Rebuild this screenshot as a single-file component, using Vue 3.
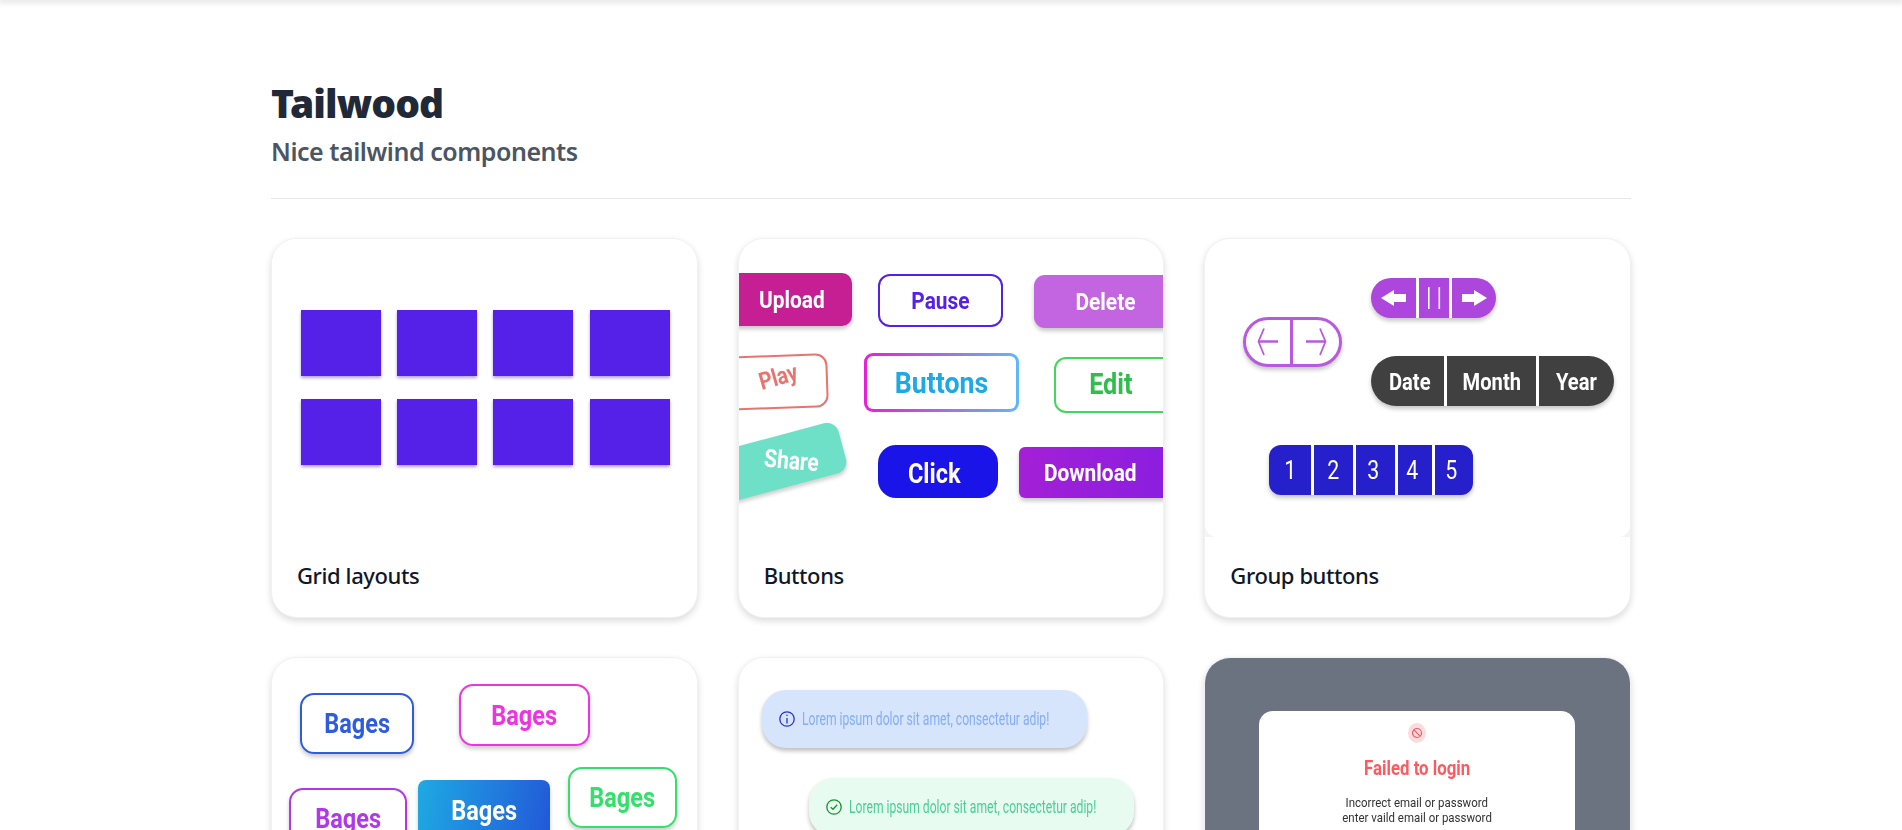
<script setup>
const squares = Array.from({ length: 8 }, (_, i) => i)
const numbers = [1, 2, 3, 4, 5]
</script>

<template>
  <div class="page">
    <div class="topbar"></div>
    <main class="main">
      <header class="head">
        <h1 class="title">Tailwood</h1>
        <h2 class="subtitle">Nice tailwind components</h2>
      </header>

      <section class="cards">
        <article class="card">
          <div class="preview grid-preview">
            <div v-for="s in squares" :key="s" class="square"></div>
          </div>
          <p class="caption">Grid layouts</p>
        </article>

        <article class="card">
          <div class="preview canvas">
            <div class="btn upload"><span class="lbl">Upload</span></div>
            <div class="btn pause"><span class="lbl">Pause</span></div>
            <div class="btn delete"><span class="lbl">Delete</span></div>
            <div class="btn play"></div>
            <span class="lbl play-text">Play</span>
            <div class="btn gradient"><span class="lbl">Buttons</span></div>
            <div class="btn edit"><span class="lbl">Edit</span></div>
            <div class="btn share"></div>
            <span class="lbl share-text">Share</span>
            <div class="btn click"><span class="lbl">Click</span></div>
            <div class="btn download"><span class="lbl">Download</span></div>
          </div>
          <p class="caption">Buttons</p>
        </article>

        <article class="card">
          <div class="preview-frame">
            <div class="preview canvas rounded-bottom">
              <div class="group outline">
                <span class="seg">
                  <svg width="22" height="30" viewBox="0 0 22 30" fill="none" stroke="#b85ae0">
                    <path d="M7 1.500 1.500 14.500 7 28" stroke-width="1.800" />
                    <path d="M2 14.500H21" stroke-width="2.500" />
                  </svg>
                </span>
                <span class="seg">
                  <svg width="22" height="30" viewBox="0 0 22 30" fill="none" stroke="#b85ae0">
                    <path d="M15 1.500 20.500 14.500 15 28" stroke-width="1.800" />
                    <path d="M1 14.500H20" stroke-width="2.500" />
                  </svg>
                </span>
              </div>

              <div class="group media">
                <span class="seg">
                  <svg width="26" height="16" viewBox="0 0 26 16" fill="#fff">
                    <path d="M0 8 13 0V4H25V12H13V16Z" />
                  </svg>
                </span>
                <span class="seg">
                  <svg width="14" height="22" viewBox="0 0 14 22" fill="#fff">
                    <rect x="1" width="1.600" height="22" />
                    <rect x="11.500" width="1.600" height="22" />
                  </svg>
                </span>
                <span class="seg">
                  <svg width="26" height="16" viewBox="0 0 26 16" fill="#fff">
                    <path d="M26 8 13 0V4H1V12H13V16Z" />
                  </svg>
                </span>
              </div>

              <div class="group dates">
                <span class="seg"><span class="lbl">Date</span></span>
                <span class="seg"><span class="lbl">Month</span></span>
                <span class="seg"><span class="lbl">Year</span></span>
              </div>

              <div class="group pager">
                <span v-for="n in numbers" :key="n" class="seg"><span class="lbl">{{ n }}</span></span>
              </div>
            </div>
          </div>
          <p class="caption">Group buttons</p>
        </article>

        <article class="card">
          <div class="preview canvas">
            <div class="bage b-blue"><span class="lbl">Bages</span></div>
            <div class="bage b-pink"><span class="lbl">Bages</span></div>
            <div class="bage b-purple"><span class="lbl">Bages</span></div>
            <div class="bage b-fill"><span class="lbl">Bages</span></div>
            <div class="bage b-green"><span class="lbl">Bages</span></div>
          </div>
        </article>

        <article class="card">
          <div class="preview canvas">
            <div class="alert a-blue">
              <svg width="16" height="20" viewBox="0 0 16 20" fill="none" stroke="#2a2fdc" stroke-width="1.300">
                <circle cx="8" cy="10" r="7.200" />
                <path d="M8 9V14.500" />
                <path d="M8 5.800V6.900" />
              </svg>
              <span class="lbl">Lorem ipsum dolor sit amet, consectetur adip!</span>
            </div>
            <div class="alert a-green">
              <svg width="16" height="20" viewBox="0 0 16 20" fill="none" stroke="#15922b" stroke-width="1.300">
                <circle cx="8" cy="10" r="7.200" />
                <path d="M4.700 10.200 7 12.300 11.200 7.800" />
              </svg>
              <span class="lbl">Lorem ipsum dolor sit amet, consectetur adip!</span>
            </div>
          </div>
        </article>

        <article class="card">
          <div class="preview modal-preview">
            <div class="modal">
              <span class="ban">
                <svg width="12" height="12" viewBox="0 0 12 12" fill="none" stroke="#ee5b66" stroke-width="1.200">
                  <circle cx="6" cy="6" r="4.500" />
                  <path d="M2.900 2.900 9.100 9.100" />
                </svg>
              </span>
              <strong class="modal-title"><span class="lbl">Failed to login</span></strong>
              <p class="modal-body"><span class="lbl">Incorrect email or password</span></p>
              <p class="modal-body"><span class="lbl">enter vaild email or password</span></p>
            </div>
          </div>
        </article>
      </section>
    </main>
  </div>
</template>

<style scoped>
.page {
  height: 830px;
  overflow: hidden;
  background: #fff;
  font-family: "Noto Sans", "Open Sans", sans-serif;
}
.topbar {
  height: 0;
  box-shadow: 0 0 6px 2px rgba(0, 0, 0, 0.16);
}
.main {
  width: 1360px;
  margin: 0 auto;
  padding-top: 78px;
}
.head {
  height: 121px;
  border-bottom: 1px solid #e5e7eb;
  box-sizing: border-box;
}
.title {
  margin: 0;
  font-size: 39px;
  line-height: 50px;
  font-weight: 900;
  color: #1f2937;
  letter-spacing: -0.95px;
}
.subtitle {
  margin: 7px 0 0;
  font-size: 25px;
  line-height: 32px;
  font-weight: 600;
  color: #4b5563;
  letter-spacing: -0.45px;
}
.cards {
  margin-top: 39px;
  display: grid;
  grid-template-columns: repeat(3, 1fr);
  column-gap: 40px;
  row-gap: 39px;
}
.card {
  height: 380px;
  box-sizing: border-box;
  display: flex;
  flex-direction: column;
  border: 1px solid #f1f1f3;
  border-radius: 26px;
  overflow: hidden;
  background: #fff;
  box-shadow: 0 3px 7px rgba(0, 0, 0, 0.14);
}
.caption {
  flex: 1;
  margin: 0;
  padding: 0 0 4px 25px;
  display: flex;
  align-items: center;
  font-size: 22px;
  font-weight: 500;
  color: #0f172a;
  letter-spacing: -0.4px;
}
.preview {
  height: 298px;
  flex: none;
  overflow: hidden;
  background: #fff;
}
.preview-frame {
  flex: none;
  background: #f3f4f6;
}
.rounded-bottom {
  border-radius: 0 0 12px 12px;
}
.canvas {
  position: relative;
  filter: blur(0.3px);
}
.lbl {
  display: inline-block;
  font-family: Roboto, sans-serif;
  white-space: nowrap;
}

/* grid card */
.grid-preview {
  box-sizing: border-box;
  padding: 71px 28.500px 0;
  display: grid;
  grid-template-columns: repeat(4, 80px);
  grid-auto-rows: 66px;
  column-gap: 16.400px;
  row-gap: 23px;
  align-content: start;
}
.square {
  background: #5520e8;
  box-shadow: 0 2px 3px rgba(60, 20, 160, 0.4);
}

/* buttons card */
.btn {
  position: absolute;
  box-sizing: border-box;
  display: flex;
  align-items: center;
  justify-content: center;
  font-size: 24px;
}
.btn .lbl {
  font-weight: 700;
  transform: scaleX(0.87);
}
.play-text,
.share-text {
  font-weight: 700;
}
.upload {
  left: -20px;
  top: 34px;
  width: 133px;
  height: 53px;
  padding-left: 14px;
  border-radius: 10px;
  background: #c61f93;
  color: #fff;
  box-shadow: 0 3px 4px rgba(0, 0, 0, 0.22);
}
.pause {
  left: 139.500px;
  top: 35px;
  width: 125px;
  height: 53px;
  border: 2.500px solid #5520e8;
  border-radius: 12px;
  color: #5520e8;
}
.delete {
  left: 295px;
  top: 36px;
  width: 165px;
  height: 53px;
  padding-right: 21px;
  border-radius: 11px;
  background: #c364e0;
  color: #fff;
  box-shadow: 0 3px 4px rgba(0, 0, 0, 0.22);
}
.play {
  left: -20px;
  top: 116px;
  width: 109px;
  height: 54px;
  border: 2.500px solid #e8746f;
  border-radius: 12px;
  transform: rotate(-2deg);
}
.play-text {
  position: absolute;
  left: 16px;
  top: 124px;
  font-size: 24px;
  color: #e8746f;
  transform: rotate(-16deg) scaleX(0.84);
}
.gradient {
  left: 125px;
  top: 114px;
  width: 155px;
  height: 59px;
  border: 3px solid transparent;
  border-radius: 9px;
  background: linear-gradient(#fff, #fff) padding-box,
    linear-gradient(to right, #e81fd8, #5fb8f8) border-box;
  color: #1da9e5;
  font-size: 30px;
}
.gradient .lbl {
  transform: scaleX(0.89);
}
.edit {
  left: 315px;
  top: 118px;
  width: 160px;
  height: 56px;
  padding: 0 46px 4px 0;
  border: 2.500px solid #3fd85b;
  border-radius: 12px;
  color: #2fbd4b;
  font-size: 30px;
}
.edit .lbl {
  transform: scaleX(0.84);
}
.share {
  left: -54px;
  top: 201px;
  width: 160px;
  height: 52px;
  border-radius: 12px;
  background: #6fe0c8;
  box-shadow: 0 3px 4px rgba(0, 0, 0, 0.18);
  transform: rotate(-15deg);
}
.share-text {
  position: absolute;
  left: 20px;
  top: 207px;
  font-size: 25px;
  color: #fff;
  transform: rotate(5deg) scaleX(0.84);
}
.click {
  left: 139px;
  top: 206px;
  width: 120px;
  height: 53px;
  padding: 4px 6px 0 0;
  border-radius: 18px;
  background: #1b14e8;
  color: #fff;
  font-size: 27px;
}
.download {
  left: 280px;
  top: 208px;
  width: 180px;
  height: 51px;
  padding-right: 36px;
  border-radius: 6px;
  background: linear-gradient(100deg, #a420d6, #851de2);
  color: #fff;
  box-shadow: 0 3px 4px rgba(0, 0, 0, 0.22);
}

/* group buttons */
.group {
  position: absolute;
  box-sizing: border-box;
  display: grid;
  overflow: hidden;
  border-radius: 999px;
  box-shadow: 0 3px 4px rgba(0, 0, 0, 0.22);
}
.seg {
  display: flex;
  align-items: center;
  justify-content: center;
  box-sizing: border-box;
  min-width: 0;
}
.seg:not(:last-child) {
  border-right: 3px solid #fff;
}
.group .lbl {
  font-weight: 700;
  color: #fff;
  transform: scaleX(0.84);
}
.outline {
  left: 38px;
  top: 78px;
  width: 99px;
  height: 50px;
  grid-template-columns: 1fr 1fr;
  border: 3px solid #b85ae0;
  background: #fff;
}
.outline .seg:not(:last-child) {
  border-right-color: #b85ae0;
}
.media {
  left: 166px;
  top: 38.500px;
  width: 125px;
  height: 40px;
  grid-template-columns: 47.500px 33px 1fr;
  background: #ac46dc;
}
.dates {
  left: 166px;
  top: 117px;
  width: 243px;
  height: 50px;
  grid-template-columns: 75.500px 92px 1fr;
  background: #404040;
  font-size: 24px;
}
.dates .seg {
  padding-top: 2px;
}
.dates .seg:first-child {
  padding-left: 5px;
}
.pager {
  left: 64px;
  top: 206px;
  width: 204px;
  height: 50px;
  grid-template-columns: 44.500px 42px 42px 37px 1fr;
  border-radius: 12px;
  background: #2620cc;
  font-size: 26px;
}
.pager .lbl {
  font-weight: 400;
  transform: scaleX(0.82);
}
.pager .seg:nth-child(n + 3) {
  padding-right: 5px;
}

/* badges */
.bage {
  position: absolute;
  box-sizing: border-box;
  display: flex;
  align-items: center;
  justify-content: center;
  border: 2.500px solid;
  border-radius: 14px;
  font-size: 28px;
  box-shadow: 0 3px 4px rgba(0, 0, 0, 0.2);
}
.bage .lbl {
  font-weight: 700;
  transform: scaleX(0.84);
}
.b-blue {
  left: 28px;
  top: 35px;
  width: 114px;
  height: 61px;
  color: #2e5be0;
}
.b-pink {
  left: 187px;
  top: 26px;
  width: 131px;
  height: 62px;
  color: #ee33e0;
}
.b-purple {
  left: 17px;
  top: 130px;
  width: 118px;
  height: 60px;
  color: #b138e8;
}
.b-fill {
  left: 146px;
  top: 122px;
  width: 132px;
  height: 60px;
  border: 0;
  border-radius: 8px;
  background: linear-gradient(100deg, #1eaae3, #2258d8);
  color: #fff;
}
.b-green {
  left: 296px;
  top: 109px;
  width: 109px;
  height: 61px;
  color: #32e06a;
}

/* alerts */
.alert {
  position: absolute;
  box-sizing: border-box;
  width: 325px;
  height: 58px;
  padding-left: 17px;
  display: flex;
  align-items: center;
  gap: 7px;
  border-radius: 24px;
  font-size: 17.500px;
  box-shadow: 0 3px 4px rgba(0, 0, 0, 0.25);
}
.alert svg,
.alert .lbl {
  flex: none;
}
.alert .lbl {
  font-weight: 400;
  transform: scaleX(0.693);
  transform-origin: left center;
}
.a-blue {
  left: 23.500px;
  top: 32px;
  background: #d6e4fc;
  color: #84aef5;
}
.a-green {
  left: 70.500px;
  top: 120px;
  background: #e8fbf1;
  color: #4ace96;
}

/* modal */
.modal-preview {
  padding-top: 53px;
  box-sizing: border-box;
  background: #6b7280;
  display: flex;
  justify-content: center;
  filter: blur(0.3px);
}
.modal {
  width: 316px;
  height: 260px;
  margin-left: -2px;
  padding-top: 12px;
  box-sizing: border-box;
  display: flex;
  flex-direction: column;
  align-items: center;
  border-radius: 14px;
  background: #fff;
}
.ban {
  width: 18px;
  height: 20px;
  display: flex;
  align-items: center;
  justify-content: center;
  border-radius: 50%;
  background: #fbdcdc;
}
.modal-title {
  margin-top: 13px;
  font-size: 20px;
  line-height: 24px;
  color: #fb5a60;
}
.modal-title .lbl {
  font-weight: 700;
  transform: scaleX(0.84);
}
.modal-body {
  margin: 0;
  font-size: 13.500px;
  line-height: 15px;
  color: #333;
}
.modal-body .lbl {
  transform: scaleX(0.85);
}
.modal-title + .modal-body {
  margin-top: 15px;
}
</style>

<style>
html,
body {
  margin: 0;
  background: #fff;
}
</style>
